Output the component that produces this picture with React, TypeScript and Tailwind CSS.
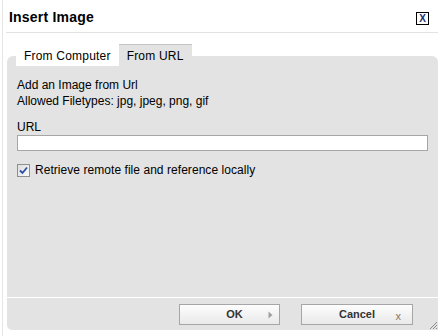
import React from 'react';

function CheckBox() {
  return (
    <span className="w-[13px] h-[13px] shrink-0 border border-[#8f8f8f] bg-linear-to-br from-[#dcdcdc] to-[#fbfbfb] flex items-center justify-center">
      <svg width="9" height="9" viewBox="0 0 9 9">
        <path d="M1 4.5 L3.5 7 L8 1.5" fill="none" stroke="#2b4fa8" strokeWidth="1.8" />
      </svg>
    </span>
  );
}

export default function App() {
  return (
    <div className="w-[443px] h-[336px] bg-white flex font-['Liberation_Sans',Arial,sans-serif] text-[12px] text-black">
      <div className="ml-[2px] w-px bg-[#e6e6e6]" />
      <div className="ml-[3px] w-[432px] flex flex-col">
        {/* Title bar */}
        <div className="h-[32px] flex justify-between border-b border-[#e2e2e2] box-content">
          <span className="pl-[3px] pt-[7px] leading-[20px] text-[14px] font-bold tracking-[0.2px]">Insert Image</span>
          <span className="mt-[12px] mr-[9px] w-[13px] h-[13px] border border-black flex items-center justify-center text-[10px] leading-none font-bold text-[#1b2e6b]">
            X
          </span>
        </div>

        {/* Tabs */}
        <div className="relative z-10 mt-[11px] -mb-[10px] pl-[10px] flex tracking-[0.2px]">
          <div className="h-[22px] px-[8px] pt-[4px] leading-[16px] bg-white">From Computer</div>
          <div className="h-[22px] px-[8px] pt-[3px] leading-[16px] bg-[#e3e3e3] border-t border-[#c4c4c4]">From URL</div>
        </div>

        {/* Panel */}
        <div className="ml-px flex-1 bg-[#e3e3e3] rounded-t-[6px] px-[10px] pt-[21px]">
          <div className="leading-[16px]">Add an Image from Url</div>
          <div className="leading-[16px]">Allowed Filetypes: jpg, jpeg, png, gif</div>
          <div className="mt-[10px] leading-[16px]">URL</div>
          <div className="h-[16px] bg-white border border-[#a6a6a6]" />
          <label className="mt-[11px] flex items-center gap-[5px] leading-[16px]">
            <CheckBox />
            <span className="tracking-[0.05px]">Retrieve remote file and reference locally</span>
          </label>
        </div>

        {/* Footer */}
        <div className="ml-px mt-px h-[32px] bg-[#e3e3e3] rounded-bl-[5px] relative flex justify-end items-start pt-[6px] pr-[25px] gap-[21px]">
          <button className="relative w-[101px] h-[21px] border border-[#a6a6a6] bg-linear-to-b from-[#fdfdfd] to-[#e9e9e9] flex items-center justify-center pl-[10px] text-[11px] font-bold text-[#333]">
            OK
            <svg className="absolute right-[6px] top-[6px]" width="5" height="8" viewBox="0 0 5 8">
              <path d="M0.5 0.5 L4.5 4 L0.5 7.5 Z" fill="#a0a0a0" />
            </svg>
          </button>
          <button className="relative w-[112px] h-[21px] border border-[#a6a6a6] bg-linear-to-b from-[#fdfdfd] to-[#e9e9e9] flex items-center justify-center text-[11px] font-bold text-[#333]">
            Cancel
            <span className="absolute right-[11px] top-[3px] text-[11px] font-normal text-[#8b7766]">x</span>
          </button>
          <svg className="absolute right-0 bottom-0" width="10" height="10" viewBox="0 0 10 10">
            <path d="M9 2 L2 9 M9 5 L5 9 M9 8 L8 9" stroke="#8a8a8a" strokeWidth="1" />
          </svg>
        </div>
        <div className="h-[6px]" />
      </div>
    </div>
  );
}
